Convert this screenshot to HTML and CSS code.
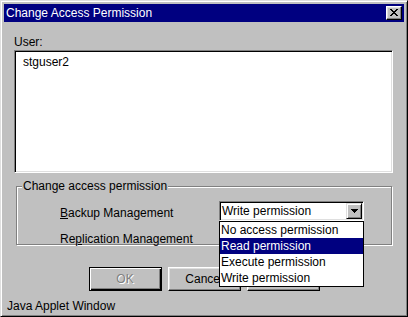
FILE: index.html
```html
<!DOCTYPE html>
<html>
<head>
<meta charset="utf-8">
<title>Change Access Permission</title>
<link rel="stylesheet" href="styles.css">
</head>
<body>
<div class="window">
  <div class="titlebar">
    <span class="title">Change Access Permission</span>
    <button class="close" aria-label="Close">
      <svg width="8" height="7" viewBox="0 0 8 7" shape-rendering="crispEdges"><path fill="#000" d="M0 0h2v1H0z M6 0h2v1H6z M1 1h2v1H1z M5 1h2v1H5z M2 2h4v1H2z M3 3h2v1H3z M2 4h4v1H2z M1 5h2v1H1z M5 5h2v1H5z M0 6h2v1H0z M6 6h2v1H6z"/></svg>
    </button>
  </div>
  <div class="body">
    <div class="label">User:</div>
    <div class="textarea">stguser2</div>
    <fieldset class="group">
      <legend>Change access permission</legend>
      <div class="grid">
        <span class="rowlabel"><u>B</u>ackup Management</span>
        <div class="combo">
          <span class="value">Write permission</span>
          <span class="arrow"><svg width="7" height="4" viewBox="0 0 7 4" shape-rendering="crispEdges"><path fill="#000" d="M0 0h7v1H0z M1 1h5v1H1z M2 2h3v1H2z M3 3h1v1H3z"/></svg></span>
          <ul class="dropdown">
            <li>No access permission</li>
            <li class="selected">Read permission</li>
            <li>Execute permission</li>
            <li>Write permission</li>
          </ul>
        </div>
        <span class="rowlabel">Re<u>p</u>lication Management</span>
        <div class="combo">
          <span class="value">Write permission</span>
          <span class="arrow"><svg width="7" height="4" viewBox="0 0 7 4" shape-rendering="crispEdges"><path fill="#000" d="M0 0h7v1H0z M1 1h5v1H1z M2 2h3v1H2z M3 3h1v1H3z"/></svg></span>
        </div>
      </div>
    </fieldset>
    <div class="buttons">
      <button class="btn default" disabled>OK</button>
      <button class="btn">Cancel</button>
      <button class="btn">Help</button>
    </div>
  </div>
  <div class="status">Java Applet Window</div>
</div>
</body>
</html>
```
FILE: styles.css
```css
* { box-sizing: border-box; }
html, body { margin: 0; padding: 0; }
body {
  width: 408px;
  height: 317px;
  background: #c0c0c0;
  font: 12px/14px "Liberation Sans", Arial, sans-serif;
  color: #000;
}
.window {
  width: 408px;
  height: 317px;
  display: flex;
  flex-direction: column;
  padding: 3px;
  border: 1px solid;
  border-color: #dfdfdf #000 #000 #dfdfdf;
  box-shadow: inset 1px 1px #fff, inset -1px -1px #808080;
  background: #c0c0c0;
}
.titlebar {
  height: 18px;
  flex: none;
  background: #000080;
  color: #fff;
  display: flex;
  align-items: center;
  justify-content: space-between;
  padding: 0 2px;
  line-height: 18px;
}
.close {
  width: 16px;
  height: 14px;
  padding: 0;
  margin: 0;
  border: 1px solid;
  border-color: #fff #000 #000 #fff;
  box-shadow: inset -1px -1px #808080, inset 1px 1px #dfdfdf;
  background: #c0c0c0;
  display: flex;
  align-items: center;
  justify-content: center;
}
.close svg { display: block; margin: 0 1px 1px 0; }
.body {
  padding-top: 13px;
  display: flex;
  flex-direction: column;
}
.label { margin-left: 10px; }
.textarea {
  margin: 1px 0 0 10px;
  width: 379px;
  height: 123px;
  background: #fff;
  border: 1px solid;
  border-color: #808080 #fff #fff #808080;
  box-shadow: inset 1px 1px #000, inset -1px -1px #dfdfdf;
  padding: 4px 8px;
}
.group {
  margin: 6px 0 0 12px;
  width: 376px;
  height: 66px;
  border: 1px solid #808080;
  box-shadow: inset 1px 1px #fff, 1px 1px #fff;
  padding: 0 0 0 5px;
  min-width: 0;
}
.group legend {
  padding: 0 1px;
  margin: 0;
  background: #c0c0c0;
  line-height: 14px;
}
.grid {
  display: grid;
  grid-template-columns: 159px 145px;
  grid-auto-rows: 20px;
  row-gap: 6px;
  margin: 8px 0 0 38px;
}
.rowlabel { padding-top: 5px; white-space: nowrap; }
.combo {
  position: relative;
  width: 145px;
  height: 20px;
  background: #fff;
  border: 1px solid;
  border-color: #808080 #fff #fff #808080;
  box-shadow: inset 1px 1px #000, inset -1px -1px #dfdfdf;
  padding: 1px;
  display: flex;
}
.value {
  flex: 1;
  line-height: 16px;
  padding-left: 1px;
  white-space: nowrap;
}
.arrow {
  width: 16px;
  height: 16px;
  border: 1px solid;
  border-color: #dfdfdf #000 #000 #dfdfdf;
  box-shadow: inset 1px 1px #fff, inset -1px -1px #808080;
  background: #c0c0c0;
  display: flex;
  align-items: center;
  justify-content: center;
}
.arrow svg { display: block; }
.dropdown {
  position: absolute;
  top: 19px;
  left: -1px;
  width: 145px;
  margin: 0;
  padding: 0;
  list-style: none;
  background: #fff;
  border: 1px solid #000;
  z-index: 2;
}
.dropdown li {
  line-height: 16px;
  height: 16px;
  padding-left: 1px;
  white-space: nowrap;
}
.dropdown li.selected { background: #000080; color: #fff; }
.buttons {
  margin-top: 22px;
  display: flex;
  justify-content: center;
  gap: 6px;
}
.btn {
  width: 73px;
  height: 24px;
  padding: 0;
  margin: 0;
  font: inherit;
  color: #000;
  background: #c0c0c0;
  border: 1px solid;
  border-color: #fff #000 #000 #fff;
  box-shadow: inset -1px -1px #808080, inset 1px 1px #dfdfdf;
}
.btn.default {
  border-color: #000;
  box-shadow: inset 1px 1px #fff, inset -1px -1px #000, inset -2px -2px #808080;
}
.btn:disabled { color: #808080; text-shadow: 1px 1px #fff; }
.status {
  margin-top: auto;
  padding-left: 3px;
  line-height: 14px;
}
```
